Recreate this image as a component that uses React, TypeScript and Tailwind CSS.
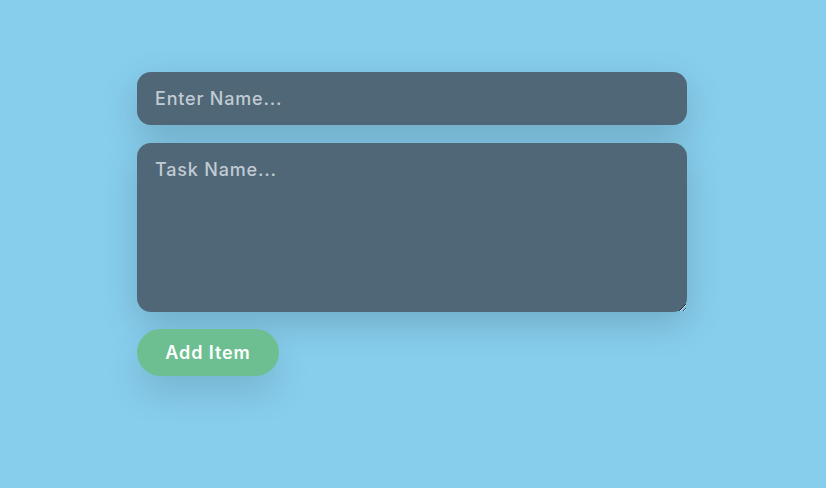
import { useState } from "react";

export default function App() {
  const [name, setName] = useState("");
  const [task, setTask] = useState("");

  return (
    <div
      className="min-h-screen w-full bg-[#87ceed] pt-[72px]"
      style={{ fontFamily: "Inter, 'Noto Sans', sans-serif" }}
    >
      <form
        className="ml-[137px] flex w-[550px] flex-col items-start gap-[18px]"
        onSubmit={(e) => e.preventDefault()}
      >
        <input
          type="text"
          value={name}
          onChange={(e) => setName(e.target.value)}
          placeholder="Enter Name..."
          className="h-[53px] w-full rounded-[14px] bg-[#4f6777] px-[18px] text-[18px] font-medium tracking-[0.045em] text-white shadow-[0_12px_36px_rgba(0,0,0,0.17)] outline-none placeholder:text-[#c2cbd3]"
        />
        <textarea
          value={task}
          onChange={(e) => setTask(e.target.value)}
          placeholder="Task Name..."
          className="h-[169px] w-full rounded-[14px] bg-[#4f6777] px-[18px] pt-[13px] text-[18px] font-medium tracking-[0.045em] text-white shadow-[0_12px_36px_rgba(0,0,0,0.17)] outline-none placeholder:text-[#c2cbd3]"
        />
        <button
          type="submit"
          className="-mt-[1px] h-[47px] w-[142px] rounded-full bg-[#6dbf92] text-[18px] font-semibold tracking-[0.05em] text-white shadow-[0_18px_36px_rgba(0,0,0,0.12)]"
        >
          Add Item
        </button>
      </form>
    </div>
  );
}
